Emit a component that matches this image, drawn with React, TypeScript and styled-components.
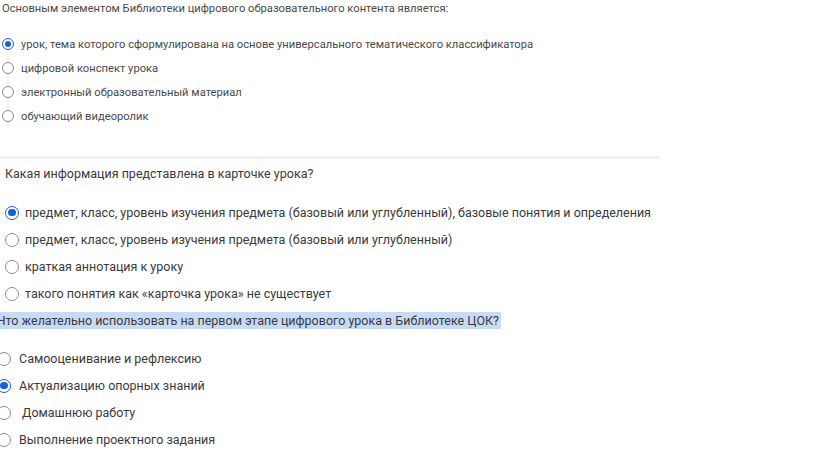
import React from "react";
import styled, { createGlobalStyle, css } from "styled-components";

const Global = createGlobalStyle`
  html, body { margin: 0; padding: 0; background: #fff; }
  body { font-family: Roboto, "Noto Sans", Arial, sans-serif; overflow: hidden; }
  * { box-sizing: border-box; }
`;

const Page = styled.div`
  width: 816px;
  height: 472px;
  display: flex;
  flex-direction: column;
  overflow: hidden;
`;

const Section = styled.section<{ $fs: number; $shift: number; $mt: number; $color: string }>`
  display: flex;
  flex-direction: column;
  margin-left: ${(p) => p.$shift}px;
  margin-top: ${(p) => p.$mt}px;
  font-size: ${(p) => p.$fs}px;
  color: ${(p) => p.$color};
`;

const Question = styled.div<{ $h: number; $pl: number; $mb: number; $hl?: boolean }>`
  height: ${(p) => p.$h}px;
  line-height: ${(p) => p.$h}px;
  padding-left: ${(p) => p.$pl}px;
  margin-bottom: ${(p) => p.$mb}px;
  white-space: nowrap;
  ${(p) =>
    p.$hl &&
    css`
      align-self: flex-start;
      background: #c8dbf6;
      padding-right: 2px;
    `}
`;

const Options = styled.div`
  display: flex;
  flex-direction: column;
`;

const Option = styled.label<{ $h: number; $gap: number; $pl: number }>`
  display: flex;
  align-items: center;
  height: ${(p) => p.$h}px;
  gap: ${(p) => p.$gap}px;
  padding-left: ${(p) => p.$pl}px;
  white-space: nowrap;
`;

const Radio = styled.span<{ $size: number; $checked: boolean }>`
  flex: none;
  width: ${(p) => p.$size}px;
  height: ${(p) => p.$size}px;
  border-radius: 50%;
  border: 1.5px solid ${(p) => (p.$checked ? "#1a5fd8" : "#8c8c8c")};
  display: flex;
  align-items: center;
  justify-content: center;
  &::after {
    content: "";
    width: ${(p) => p.$size * 0.55}px;
    height: ${(p) => p.$size * 0.55}px;
    border-radius: 50%;
    background: #1a5fd8;
    display: ${(p) => (p.$checked ? "block" : "none")};
  }
`;

const Divider = styled.div`
  width: 660px;
  height: 3px;
  margin-top: 28px;
  background: linear-gradient(to bottom, #f6f6f6, #ededed, #f6f6f6);
  border-radius: 2px;
`;

const OptText = styled.span<{ $indent?: number }>`
  padding-left: ${(p) => p.$indent ?? 0}px;
`;

type Opt = { text: string; checked?: boolean; indent?: number };

const q1: Opt[] = [
  { text: "урок, тема которого сформулирована на основе универсального тематического классификатора", checked: true },
  { text: "цифровой конспект урока" },
  { text: "электронный образовательный материал" },
  { text: "обучающий видеоролик" },
];

const q2: Opt[] = [
  { text: "предмет, класс, уровень изучения предмета (базовый или углубленный), базовые понятия и определения", checked: true },
  { text: "предмет, класс, уровень изучения предмета (базовый или углубленный)" },
  { text: "краткая аннотация к уроку" },
  { text: "такого понятия как «карточка урока» не существует" },
];

const q3: Opt[] = [
  { text: "Самооценивание и рефлексию" },
  { text: "Актуализацию опорных знаний", checked: true },
  { text: "Домашнюю работу", indent: 3 },
  { text: "Выполнение проектного задания" },
];

export default function App() {
  return (
    <Page>
      <Global />
      <Section $fs={11.2} $shift={0} $mt={0} $color="#4a4a4a">
        <Question $h={18} $pl={2} $mb={14}>
          Основным элементом Библиотеки цифрового образовательного контента является:
        </Question>
        <Options>
          {q1.map((o) => (
            <Option key={o.text} $h={24} $gap={7} $pl={2}>
              <Radio $size={12} $checked={!!o.checked} />
              <OptText $indent={o.indent}>{o.text}</OptText>
            </Option>
          ))}
        </Options>
        <Divider />
      </Section>
      <Section $fs={12.5} $shift={0} $mt={6} $color="#3a3a3a">
        <Question $h={18} $pl={5} $mb={16}>
          Какая информация представлена в карточке урока?
        </Question>
        <Options>
          {q2.map((o) => (
            <Option key={o.text} $h={27} $gap={6} $pl={5}>
              <Radio $size={14} $checked={!!o.checked} />
              <OptText $indent={o.indent}>{o.text}</OptText>
            </Option>
          ))}
        </Options>
      </Section>
      <Section $fs={12.5} $shift={-3} $mt={5} $color="#3a3a3a">
        <Question $h={17} $pl={0} $mb={16} $hl>
          Что желательно использовать на первом этапе цифрового урока в Библиотеке ЦОК?
        </Question>
        <Options>
          {q3.map((o) => (
            <Option key={o.text} $h={27} $gap={8} $pl={0}>
              <Radio $size={14} $checked={!!o.checked} />
              <OptText $indent={o.indent}>{o.text}</OptText>
            </Option>
          ))}
        </Options>
      </Section>
    </Page>
  );
}
